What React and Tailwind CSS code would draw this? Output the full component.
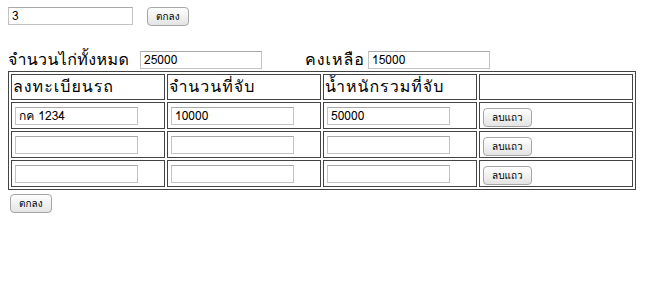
import React from "react";

const rows = [
  { plate: "กค 1234", count: "10000", weight: "50000" },
  { plate: "", count: "", weight: "" },
  { plate: "", count: "", weight: "" },
];

function Field({ value, className = "" }) {
  return (
    <div
      className={`h-[18px] border border-[#c3c3c3] border-t-[#a9a9a9] bg-white px-[3px] text-[12px] leading-[16px] text-black ${className}`}
    >
      {value}
    </div>
  );
}

function Btn({ children, className = "" }) {
  return (
    <button
      className={`h-[19px] rounded-[4px] border border-[#a6a6a6] bg-gradient-to-b from-white to-[#e4e4e4] px-[8px] text-[10px] leading-[17px] text-black ${className}`}
    >
      {children}
    </button>
  );
}

export default function App() {
  return (
    <div className="h-[303px] w-[672px] bg-white pl-[8px] pt-[7px] font-['Tahoma','Loma','Garuda','Noto_Sans',sans-serif] text-black">
      <div className="flex items-start">
        <Field value="3" className="w-[125px]" />
        <Btn className="ml-[14px]">ตกลง</Btn>
      </div>

      <div className="mt-[24px] flex items-center h-[19px]">
        <span className="w-[132px] text-[16px] tracking-[0.4px]">จำนวนไก่ทั้งหมด</span>
        <Field value="25000" className="w-[122px]" />
        <span className="ml-[43px] w-[63px] text-[16px] tracking-[1px]">คงเหลือ</span>
        <Field value="15000" className="w-[122px]" />
      </div>

      <table className="mt-[2px] w-[628px] table-fixed border-separate border-spacing-[2px] border border-[#444]">
        <tbody>
          <tr className="h-[26px]">
            {["ลงทะเบียนรถ", "จำนวนที่จับ", "น้ำหนักรวมที่จับ", ""].map((h, i) => (
              <td
                key={i}
                className="border border-[#444] px-[1px] text-left align-middle text-[16px] tracking-[1px]"
              >
                {h || "\u00a0"}
              </td>
            ))}
          </tr>
          {rows.map((r, i) => (
            <tr key={i} className="h-[27px]">
              <td className="border border-[#444] px-[3px] align-middle">
                <Field value={r.plate} className="w-[123px]" />
              </td>
              <td className="border border-[#444] px-[3px] align-middle">
                <Field value={r.count} className="w-[123px]" />
              </td>
              <td className="border border-[#444] px-[3px] align-middle">
                <Field value={r.weight} className="w-[123px]" />
              </td>
              <td className="border border-[#444] px-[3px] align-middle">
                <Btn>ลบแถว</Btn>
              </td>
            </tr>
          ))}
        </tbody>
      </table>

      <Btn className="ml-[2px] mt-[2px]">ตกลง</Btn>
    </div>
  );
}
